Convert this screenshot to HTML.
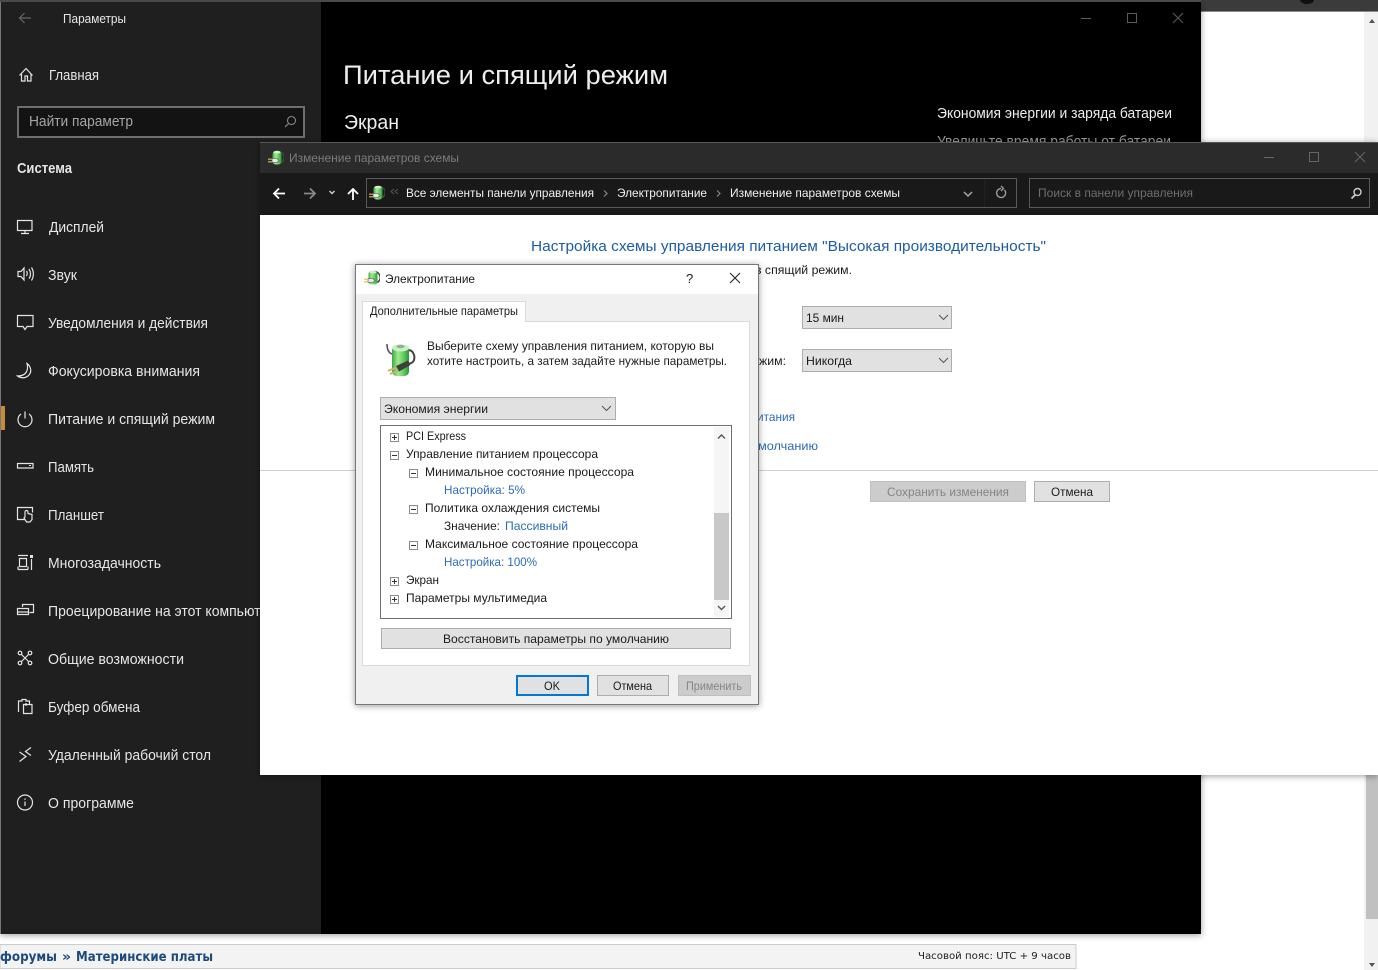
<!DOCTYPE html>
<html lang="ru"><head><meta charset="utf-8"><title>Параметры</title>
<style>
html,body{margin:0;padding:0;background:#fff;width:1378px;height:970px;overflow:hidden}
svg{display:block;position:absolute;left:0;top:0}
text{font-family:"Liberation Sans",sans-serif;font-size:12px;white-space:pre}
.s text,.s{font-size:14.5px;fill:#e6e6e6}
.d{font-size:12px;fill:#1a1a1a}
.b{font-size:12px;fill:#2a6bb5}
.i{fill:none;stroke:#e4e4e4;stroke-width:1.2}
.v{font-family:"DejaVu Sans",sans-serif}
</style></head><body>
<svg width="1378" height="970" viewBox="0 0 1378 970" xmlns="http://www.w3.org/2000/svg">
<defs>
<filter id="sh" x="-5%" y="-5%" width="110%" height="110%"><feDropShadow dx="0" dy="1" stdDeviation="3.5" flood-color="#000" flood-opacity=".4"/></filter>
<linearGradient id="g" x1="0" x2="1" y1="0" y2="0"><stop offset="0" stop-color="#3aa648"/><stop offset=".35" stop-color="#a4ea90"/><stop offset=".7" stop-color="#5ccb5c"/><stop offset="1" stop-color="#2b9638"/></linearGradient>
<symbol id="bat" viewBox="0 0 32 35">
<path d="M2 2C2 8 4 11 7 12" fill="none" stroke="#555" stroke-width="1.600"/>
<path d="M23 8C29 8 30 15 29 18C28 21 26 21 23 22" fill="none" stroke="#444" stroke-width="2"/>
<rect x="7" y="3" width="17" height="31" rx="4.500" fill="url(#g)"/>
<ellipse cx="15.500" cy="6" rx="8.500" ry="3.500" fill="#c8f0c0"/>
<ellipse cx="15.500" cy="4.500" rx="4" ry="1.800" fill="#9aa99a"/>
<path d="M11 24L23 18.500L25.500 23L14 29.500Z" fill="#3e3e3e"/>
<path d="M11 25.500L3 29M13 28.500L5 32" stroke="#c9b36a" stroke-width="2"/>
</symbol>
<symbol id="bat2" viewBox="0 0 16 16">
<path d="M10 1.500a6 6 0 0 1 3.500 11" fill="none" stroke="#444" stroke-width="1.500"/>
<rect x="4.500" y="1" width="9" height="13.500" rx="3" fill="url(#g)"/>
<ellipse cx="9" cy="2.200" rx="3.500" ry="1.400" fill="#d0f0c8"/>
<path d="M4 8.500h5l2 2-2 2H4z" fill="#e8e8e8" stroke="#444" stroke-width=".6"/>
<path d="M0 9.200h4M0 11.800h4" stroke="#d8c04a" stroke-width="1.200"/>
</symbol>
</defs>

<!-- browser page behind -->
<rect width="1378" height="970" fill="#fff"/>
<rect width="1378" height="11" fill="#3b3b3b"/>
<rect y="11" width="1378" height="1" fill="#888"/>
<ellipse cx="1307" cy="0" rx="7" ry="4" fill="#111"/>
<rect x="1364" y="12" width="14" height="958" fill="#f1f1f1"/>
<rect x="1366" y="775" width="12" height="144" fill="#c0c0c0"/>
<path d="M1369 23l3-4 3 4z" fill="#555"/>
<path d="M1369 963l3 4 3-4z" fill="#555"/>
<rect x="0" y="944.500" width="1076" height="24" fill="#f3f3f3" stroke="#ccc"/>
<text class="v" x="0" y="961" font-weight="bold" fill="#1c4a7c" textLength="57" lengthAdjust="spacingAndGlyphs" style="font-size:13px">форумы</text>
<text class="v" x="62" y="961" font-weight="bold" fill="#1c4a7c" style="font-size:13px" textLength="9" lengthAdjust="spacingAndGlyphs">»</text>
<text class="v" x="76" y="961" font-weight="bold" fill="#1c4a7c" style="font-size:13px" textLength="137" lengthAdjust="spacingAndGlyphs">Материнские платы</text>
<text class="v" x="918" y="959" fill="#222" style="font-size:10px" textLength="153" lengthAdjust="spacingAndGlyphs">Часовой пояс: UTC + 9 часов</text>

<!-- settings window -->
<g filter="url(#sh)"><rect x="0" y="2" width="1201" height="932" fill="#000"/></g>
<rect x="0" y="0" width="1201" height="2" fill="#4a4a4a"/>
<rect x="1" y="2" width="320" height="932" fill="#1f1f1f"/>
<rect x="0" y="2" width="1" height="932" fill="#777"/>
<rect x="1" y="406" width="4" height="24" fill="#c58a3a"/>
<path d="M31 18H19.500M24.500 13l-5 5 5 5" fill="none" stroke="#666" stroke-width="1.200"/>
<text x="63" y="23" style="font-size:12.500px" fill="#e6e6e6" textLength="63" lengthAdjust="spacingAndGlyphs">Параметры</text>
<path d="M1081 18.500h10" stroke="#5c5c5c"/>
<rect x="1127.500" y="13.500" width="9" height="9" fill="none" stroke="#5c5c5c"/>
<path d="M1173 13l10 10M1183 13l-10 10" stroke="#5c5c5c"/>

<g class="s">
<text x="49" y="80" textLength="50" lengthAdjust="spacingAndGlyphs">Главная</text>
<text x="17" y="173" font-weight="bold" fill="#fff" textLength="55" lengthAdjust="spacingAndGlyphs">Система</text>
<text x="49" y="232" textLength="55" lengthAdjust="spacingAndGlyphs">Дисплей</text>
<text x="48" y="280" textLength="29" lengthAdjust="spacingAndGlyphs">Звук</text>
<text x="48" y="328" textLength="160" lengthAdjust="spacingAndGlyphs">Уведомления и действия</text>
<text x="48" y="376" textLength="152" lengthAdjust="spacingAndGlyphs">Фокусировка внимания</text>
<text x="48" y="424" textLength="167" lengthAdjust="spacingAndGlyphs">Питание и спящий режим</text>
<text x="48" y="472" textLength="46" lengthAdjust="spacingAndGlyphs">Память</text>
<text x="48" y="520" textLength="56" lengthAdjust="spacingAndGlyphs">Планшет</text>
<text x="48" y="568" textLength="113" lengthAdjust="spacingAndGlyphs">Многозадачность</text>
<text x="48" y="616" textLength="228" lengthAdjust="spacingAndGlyphs">Проецирование на этот компьютер</text>
<text x="48" y="664" textLength="136" lengthAdjust="spacingAndGlyphs">Общие возможности</text>
<text x="48" y="712" textLength="92" lengthAdjust="spacingAndGlyphs">Буфер обмена</text>
<text x="48" y="760" textLength="163" lengthAdjust="spacingAndGlyphs">Удаленный рабочий стол</text>
<text x="48" y="808" textLength="86" lengthAdjust="spacingAndGlyphs">О программе</text>
</g>
<rect x="18" y="107" width="286" height="30" fill="#131313" stroke="#6e6e6e" stroke-width="2"/>
<text x="29" y="126" style="font-size:14.500px" fill="#a5a5a5" textLength="104" lengthAdjust="spacingAndGlyphs">Найти параметр</text>
<circle cx="291.500" cy="120.500" r="4" fill="none" stroke="#888" stroke-width="1.100"/><path d="M288.500 123.500l-3.500 3.500" stroke="#888" stroke-width="1.200"/>

<!-- sidebar icons -->
<path class="i" d="M19.500 75.500L26 68.500l6.500 7M21.500 74v7h3.500v-5h2.500v5h3.500v-7"/>
<path class="i" d="M17.500 220.500h14.500v10h-14.500zM25 230.500v2.500M21 233.500h8"/>
<path class="i" d="M18 271.500h3l3-3.500v12l-3-3.500h-3zM26.500 271c1 1.500 1 3 0 5M29 269c2 3 2 7 0 9.500M31.500 267.500c2.500 4 2.500 9 0 13"/>
<path class="i" d="M17.500 315.500h15.500v11h-6l-2 3-2-3h-5.500z"/>
<path class="i" d="M27 363.500c4 3 5 8 2 11.500-3 3.500-8 3.500-11.500 1 4 0 8-1 9.500-5.500 1-2.500 .5-5-0-7z"/>
<path class="i" d="M25 411.500v7M21 414a7 7 0 1 0 8 0"/>
<path class="i" d="M17.500 463.500h15.500v4.500h-15.500z"/><path d="M29 465.500h2" stroke="#e4e4e4"/>
<path class="i" d="M25 519.500h-7.500v-12h15v5M25 517v-5a1.500 1.500 0 0 1 3 0v1.500l4 1v5l-2 2.500h-3.500l-2.500-4z"/>
<path class="i" d="M18 555.500h10M18 569.500h10M19.500 558.500h7v8h-7zM18 566.500v3M28 566.500v3M31.500 559v11"/><rect x="30" y="555" width="3" height="3" fill="#e4e4e4"/>
<path class="i" d="M22.500 607v-2.500h11v8h-4M17.500 608.500h11v6h-11zM17.500 612h11"/>
<path class="i" d="M21 654l8 8M29 654l-8 8"/><circle class="i" cx="20" cy="653" r="1.800"/><circle class="i" cx="30" cy="653" r="1.800"/><circle class="i" cx="20" cy="663" r="1.800"/><circle class="i" cx="30" cy="663" r="1.800"/>
<path class="i" d="M18.500 712v-11h3.500v-1.500h4v1.500h3.500v3M23.500 704.500h8.500v9h-8.500zM26 703v3"/>
<path class="i" d="M19.500 752l6.500 4.500-6.500 5M31 747.500l-5.500 4 5.500 4"/>
<circle class="i" cx="25" cy="802.500" r="7.500"/><path d="M25 801.500v4.500" stroke="#e4e4e4" stroke-width="1.200"/><rect x="24.400" y="798.500" width="1.300" height="1.300" fill="#e4e4e4"/>

<!-- settings content -->
<text x="343" y="84" style="font-size:27px" fill="#eee" textLength="325" lengthAdjust="spacingAndGlyphs">Питание и спящий режим</text>
<text x="344" y="129" style="font-size:20px" fill="#eee" textLength="55" lengthAdjust="spacingAndGlyphs">Экран</text>
<text x="937" y="118" style="font-size:14.500px" fill="#eee" textLength="235" lengthAdjust="spacingAndGlyphs">Экономия энергии и заряда батареи</text>
<text x="937" y="146" style="font-size:14.500px" fill="#999" textLength="234" lengthAdjust="spacingAndGlyphs">Увеличьте время работы от батареи</text>

<!-- control panel window -->
<g filter="url(#sh)"><rect x="260" y="142" width="1118" height="633" fill="#fff"/></g>
<rect x="260" y="142" width="1118" height="31" fill="#2b2b2b"/>
<rect x="260" y="142" width="1118" height="1" fill="#555"/>
<rect x="260" y="173" width="1118" height="42" fill="#191919"/>
<use href="#bat2" x="268" y="150" width="16" height="16"/>
<text x="289" y="162" fill="#7c7c7c" textLength="170" lengthAdjust="spacingAndGlyphs">Изменение параметров схемы</text>
<path d="M1264 157.500h10" stroke="#666"/>
<rect x="1309.500" y="152.500" width="9" height="9" fill="none" stroke="#666"/>
<path d="M1355 152l10 10M1365 152l-10 10" stroke="#666"/>

<path d="M285 193.500h-11M279 188.500l-5 5 5 5" fill="none" stroke="#fff" stroke-width="1.800"/>
<path d="M304 193.500h11M310 188.500l5 5-5 5" fill="none" stroke="#888" stroke-width="1.800"/>
<path d="M329.500 191l2.500 2.500 2.500-2.500" fill="none" stroke="#ccc" stroke-width="1.500"/>
<path d="M353 200v-11M348 194l5-5 5 5" fill="none" stroke="#fff" stroke-width="1.800"/>
<rect x="366.500" y="178.500" width="650" height="29" fill="#191919" stroke="#5a5a5a"/>
<path d="M984.500 179v28" stroke="#222"/>
<use href="#bat2" x="369" y="185" width="16" height="16"/>
<path d="M394 189l-3 2.500 3 2.500M398 189l-3 2.500 3 2.500" fill="none" stroke="#555"/>
<text x="406" y="197" fill="#f0f0f0" textLength="188" lengthAdjust="spacingAndGlyphs">Все элементы панели управления</text>
<path d="M604 190.500l3 3-3 3" fill="none" stroke="#888" stroke-width="1.200"/>
<text x="617" y="197" fill="#f0f0f0" textLength="90" lengthAdjust="spacingAndGlyphs">Электропитание</text>
<path d="M717 190.500l3 3-3 3" fill="none" stroke="#888" stroke-width="1.200"/>
<text x="730" y="197" fill="#f0f0f0" textLength="170" lengthAdjust="spacingAndGlyphs">Изменение параметров схемы</text>
<path d="M964 192l4 4 4-4" fill="none" stroke="#999" stroke-width="1.600"/>
<path d="M1004.500 190a4.500 4.500 0 1 1-3.500-1.500M1001 186l2.500 2.500-2.500 2.500" fill="none" stroke="#999" stroke-width="1.400"/>
<rect x="1029.500" y="178.500" width="340" height="29" fill="#191919" stroke="#5a5a5a"/>
<text x="1038" y="197" fill="#6e6e6e" textLength="155" lengthAdjust="spacingAndGlyphs">Поиск в панели управления</text>
<circle cx="1357.500" cy="192" r="3.500" fill="none" stroke="#ccc" stroke-width="1.400"/><path d="M1355 195l-3.500 3.500" stroke="#ccc" stroke-width="1.800"/>

<text x="531" y="251" style="font-size:15px" fill="#1c5ca5" textLength="515" lengthAdjust="spacingAndGlyphs">Настройка схемы управления питанием "Высокая производительность"</text>
<text x="755" y="274" class="d" textLength="97" lengthAdjust="spacingAndGlyphs">в спящий режим.</text>
<rect x="802.500" y="306.500" width="149" height="22" fill="#e1e1e1" stroke="#adadad"/>
<text x="806" y="322" class="d" textLength="38" lengthAdjust="spacingAndGlyphs">15 мин</text>
<path d="M939 315l4.500 4.500 4.500-4.500" fill="none" stroke="#555"/>
<text x="759" y="365" class="d" textLength="27" lengthAdjust="spacingAndGlyphs">жим:</text>
<rect x="802.500" y="349.500" width="149" height="22" fill="#e1e1e1" stroke="#adadad"/>
<text x="806" y="365" class="d" textLength="46" lengthAdjust="spacingAndGlyphs">Никогда</text>
<path d="M939 358l4.500 4.500 4.500-4.500" fill="none" stroke="#555"/>
<text x="757" y="421" class="b" textLength="38" lengthAdjust="spacingAndGlyphs">итания</text>
<text x="758" y="450" class="b" textLength="60" lengthAdjust="spacingAndGlyphs">молчанию</text>
<rect x="260" y="470" width="1118" height="1" fill="#d0d0d0"/>
<rect x="870.500" y="481.500" width="155" height="20" fill="#cccccc" stroke="#bfbfbf"/>
<text x="887" y="496" fill="#858585" textLength="122" lengthAdjust="spacingAndGlyphs">Сохранить изменения</text>
<rect x="1034.500" y="481.500" width="75" height="20" fill="#e1e1e1" stroke="#adadad"/>
<text x="1051" y="496" class="d" textLength="42" lengthAdjust="spacingAndGlyphs">Отмена</text>

<!-- dialog -->
<g filter="url(#sh)"><rect x="355.500" y="264.500" width="403" height="440" fill="#f0f0f0" stroke="#777"/></g>
<rect x="356" y="265" width="402" height="29" fill="#fff"/>
<use href="#bat2" x="364" y="270" width="16" height="16"/>
<text x="385" y="283" class="d" textLength="90" lengthAdjust="spacingAndGlyphs">Электропитание</text>
<text x="686" y="283" class="d" style="font-size:13px">?</text>
<path d="M730 273l10 10M740 273l-10 10" stroke="#222" stroke-width="1.100"/>
<rect x="362.500" y="321.500" width="387" height="344" fill="#fff" stroke="#d9d9d9"/>
<path d="M362.500 322v-20.500h163v20.500" fill="#fff" stroke="#d9d9d9"/>
<rect x="363" y="319" width="162" height="4" fill="#fff"/>
<text x="370" y="315" class="d" textLength="148" lengthAdjust="spacingAndGlyphs">Дополнительные параметры</text>
<use href="#bat" x="385" y="342" width="32" height="35"/>
<text x="427" y="350" class="d" textLength="287" lengthAdjust="spacingAndGlyphs">Выберите схему управления питанием, которую вы</text>
<text x="427" y="365" class="d" textLength="300" lengthAdjust="spacingAndGlyphs">хотите настроить, а затем задайте нужные параметры.</text>
<rect x="380.500" y="397.500" width="235" height="22" fill="#e1e1e1" stroke="#adadad"/>
<text x="384" y="413" class="d" textLength="104" lengthAdjust="spacingAndGlyphs">Экономия энергии</text>
<path d="M602 406l4.500 4.500 4.500-4.500" fill="none" stroke="#555"/>

<rect x="380.500" y="425.500" width="351" height="193" fill="#fff" stroke="#6f6f6f"/>
<rect x="714" y="427" width="15" height="190" fill="#f5f5f5"/>
<rect x="714" y="513" width="15" height="87" fill="#c8c8c8"/>
<path d="M718 438.500l3.500-3.500 3.500 3.500M718 606l3.500 3.500 3.500-3.500" fill="none" stroke="#555" stroke-width="1.400"/>
<g fill="#fff" stroke="#8a8a8a">
<rect x="390.500" y="433.500" width="8" height="8"/>
<rect x="390.500" y="451.500" width="8" height="8"/>
<rect x="409.500" y="469.500" width="8" height="8"/>
<rect x="409.500" y="505.500" width="8" height="8"/>
<rect x="409.500" y="541.500" width="8" height="8"/>
<rect x="390.500" y="577.500" width="8" height="8"/>
<rect x="390.500" y="595.500" width="8" height="8"/>
</g>
<path d="M392 437.500h5M394.500 435v5M392 455.500h5M411 473.500h5M411 509.500h5M411 545.500h5M392 581.500h5M394.500 579v5M392 599.500h5M394.500 597v5" stroke="#333"/>
<text x="406" y="440" class="d" textLength="60" lengthAdjust="spacingAndGlyphs">PCI Express</text>
<text x="406" y="458" class="d" textLength="192" lengthAdjust="spacingAndGlyphs">Управление питанием процессора</text>
<text x="425" y="476" class="d" textLength="209" lengthAdjust="spacingAndGlyphs">Минимальное состояние процессора</text>
<text x="444" y="494" class="b" textLength="81" lengthAdjust="spacingAndGlyphs">Настройка: 5%</text>
<text x="425" y="512" class="d" textLength="175" lengthAdjust="spacingAndGlyphs">Политика охлаждения системы</text>
<text x="444" y="530" class="d" textLength="56" lengthAdjust="spacingAndGlyphs">Значение:</text>
<text x="505" y="530" class="b" textLength="63" lengthAdjust="spacingAndGlyphs">Пассивный</text>
<text x="425" y="548" class="d" textLength="213" lengthAdjust="spacingAndGlyphs">Максимальное состояние процессора</text>
<text x="444" y="566" class="b" textLength="93" lengthAdjust="spacingAndGlyphs">Настройка: 100%</text>
<text x="406" y="584" class="d" textLength="33" lengthAdjust="spacingAndGlyphs">Экран</text>
<text x="406" y="602" class="d" textLength="141" lengthAdjust="spacingAndGlyphs">Параметры мультимедиа</text>

<rect x="381.500" y="628.500" width="349" height="20" fill="#e1e1e1" stroke="#adadad"/>
<text x="443" y="643" class="d" textLength="226" lengthAdjust="spacingAndGlyphs">Восстановить параметры по умолчанию</text>
<rect x="517" y="676" width="71" height="19" fill="#e1e1e1" stroke="#0078d7" stroke-width="2"/>
<text x="544" y="690" class="d" textLength="16" lengthAdjust="spacingAndGlyphs">OK</text>
<rect x="597.500" y="675.500" width="71" height="20" fill="#e1e1e1" stroke="#adadad"/>
<text x="613" y="690" class="d" textLength="39" lengthAdjust="spacingAndGlyphs">Отмена</text>
<rect x="678.500" y="675.500" width="72" height="20" fill="#cccccc" stroke="#bfbfbf"/>
<text x="686" y="690" fill="#858585" textLength="56" lengthAdjust="spacingAndGlyphs">Применить</text>
</svg>
</body></html>
